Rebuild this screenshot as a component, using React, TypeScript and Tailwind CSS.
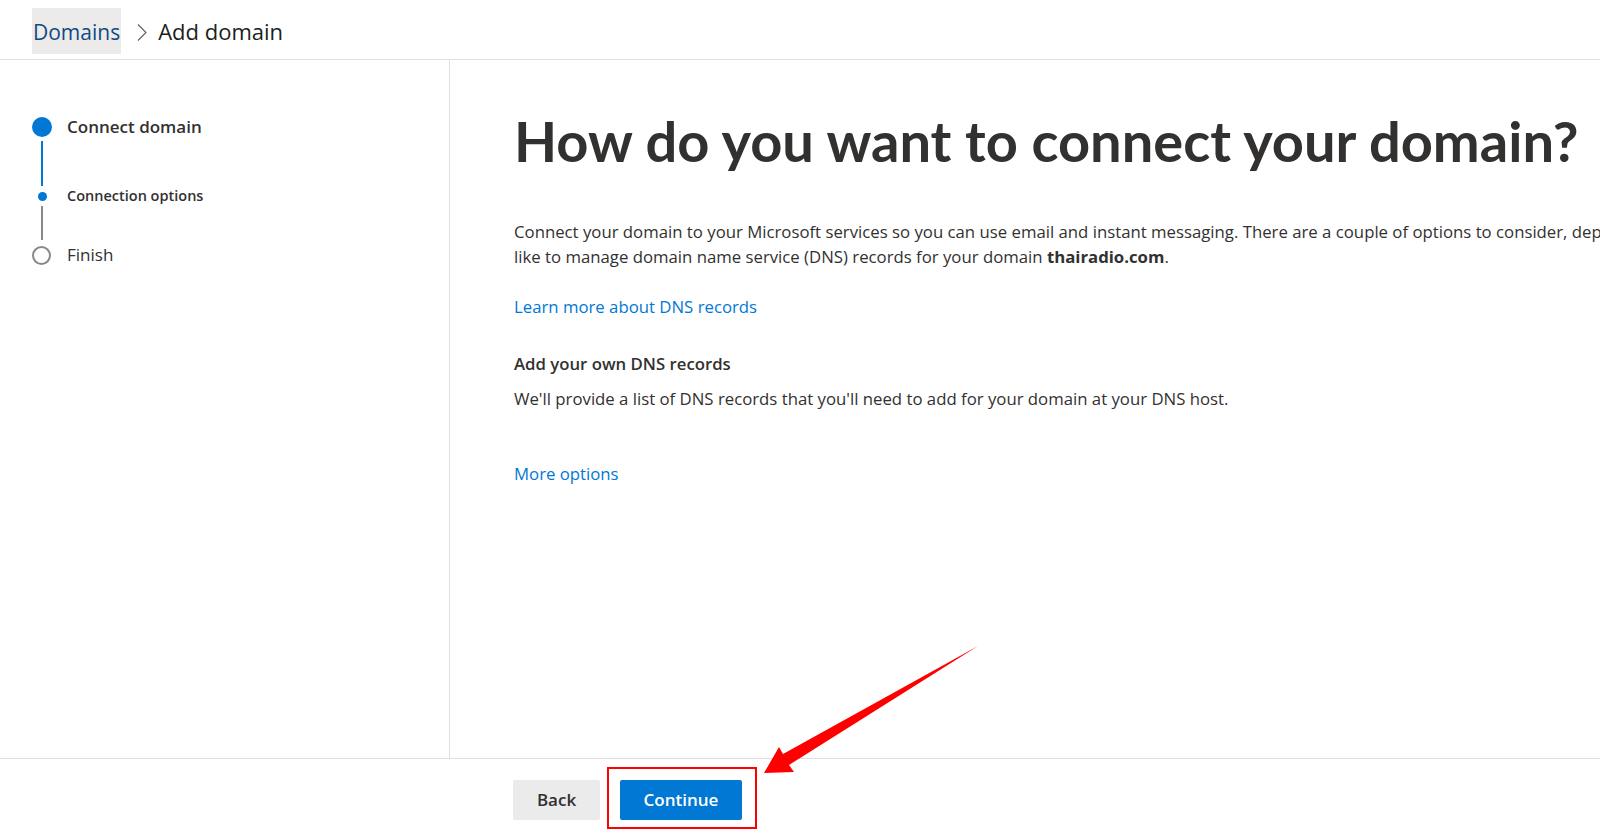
const FONT = { fontFamily: '"Open Sans", "Noto Sans", Arial, sans-serif' };
const HEAD = { fontFamily: 'Lato, "Open Sans", Arial, sans-serif' };

function Stepper() {
  return (
    <div className="pl-[32px] pt-[57px]">
      {/* Step 1 */}
      <div className="flex items-center h-[20px]">
        <div className="w-[20px] h-[20px] rounded-full bg-[#0078d4]" />
        <span className="ml-[15px] text-[17px] font-semibold text-[#323130]">Connect domain</span>
      </div>
      <div className="w-[20px] h-[54px] flex justify-center">
        <div className="mt-[4px] w-[2px] h-[45px] bg-[#0078d4]" />
      </div>
      {/* Sub step */}
      <div className="flex items-center h-[10px]">
        <div className="w-[20px] flex justify-center">
          <div className="w-[9px] h-[9px] rounded-full bg-[#0078d4]" />
        </div>
        <span className="ml-[15px] text-[14.5px] leading-[10px] font-semibold text-[#323130]">Connection options</span>
      </div>
      <div className="w-[20px] h-[45px] flex justify-center">
        <div className="mt-[5px] w-[2px] h-[34px] bg-[#8a8886]" />
      </div>
      {/* Step 3 */}
      <div className="flex items-center h-[19px]">
        <div className="w-[19px] h-[19px] rounded-full border-2 border-[#8a8886]" />
        <span className="ml-[16px] text-[17px] text-[#323130] -mt-[2px]">Finish</span>
      </div>
    </div>
  );
}

export default function App() {
  return (
    <div className="relative w-[1600px] h-[834px] overflow-hidden bg-white text-[#323130]" style={FONT}>
      {/* Header */}
      <div className="h-[60px] border-b border-[#e1dfdd] flex items-center pl-[32px] pt-[3px]">
        <div className="h-[46px] px-[1px] pt-[3px] flex items-center bg-[#edebe9] text-[21px] text-[#0f4a85]">Domains</div>
        <svg className="ml-[16px] mt-[2px]" width="10" height="17" viewBox="0 0 10 17">
          <polyline points="1,0.5 9,8.5 1,16.5" fill="none" stroke="#605e5c" strokeWidth="1.1" />
        </svg>
        <div className="ml-[11px] pt-[1px] text-[22px] font-medium text-[#201f1e]">Add domain</div>
      </div>

      <div className="flex h-[698px]">
        <aside className="w-[450px] shrink-0 border-r border-[#e1dfdd]">
          <Stepper />
        </aside>
        <main className="pl-[64px] pt-[42px] whitespace-nowrap">
          <h1 className="text-[56px] font-bold leading-[78px] text-[#323130]" style={HEAD}>
            How do you want to connect your domain?
          </h1>
          <p className="mt-[40px] text-[16.75px] leading-[24.5px]">
            Connect your domain to your Microsoft services so you can use email and instant messaging. There are a couple of options to consider, depending on how you'd
            <br />
            like to manage domain name service (DNS) records for your domain <span className="font-bold">thairadio.com</span>.
          </p>
          <a className="block mt-[25px] text-[16.75px] text-[#0078d4]">Learn more about DNS records</a>
          <div className="mt-[32px] text-[16.75px] font-semibold">Add your own DNS records</div>
          <div className="mt-[10px] text-[16.75px]">We'll provide a list of DNS records that you'll need to add for your domain at your DNS host.</div>
          <a className="block mt-[50px] text-[16.75px] text-[#0078d4]">More options</a>
        </main>
      </div>

      {/* Footer */}
      <div className="h-[76px] border-t border-[#e1dfdd] flex items-start pl-[513px] pt-[21px]">
        <button className="w-[87px] h-[40px] rounded-[2px] bg-[#ebebeb] text-[17px] font-semibold text-[#323130]">Back</button>
        <div className="ml-[7px] -mt-[13px] pt-[11px] pb-[7px] pl-[11px] pr-[13px] border-2 border-[#ff0000]">
          <button className="w-[122px] h-[40px] rounded-[2px] bg-[#0078d4] text-[17px] font-semibold text-white">Continue</button>
        </div>
      </div>

      {/* Annotation arrow */}
      <svg className="absolute left-0 top-0 pointer-events-none" width="1600" height="834">
        <polygon points="764,773 779,747 783,754 978,646 789,765 794,772" fill="#ff0000" />
      </svg>
    </div>
  );
}
